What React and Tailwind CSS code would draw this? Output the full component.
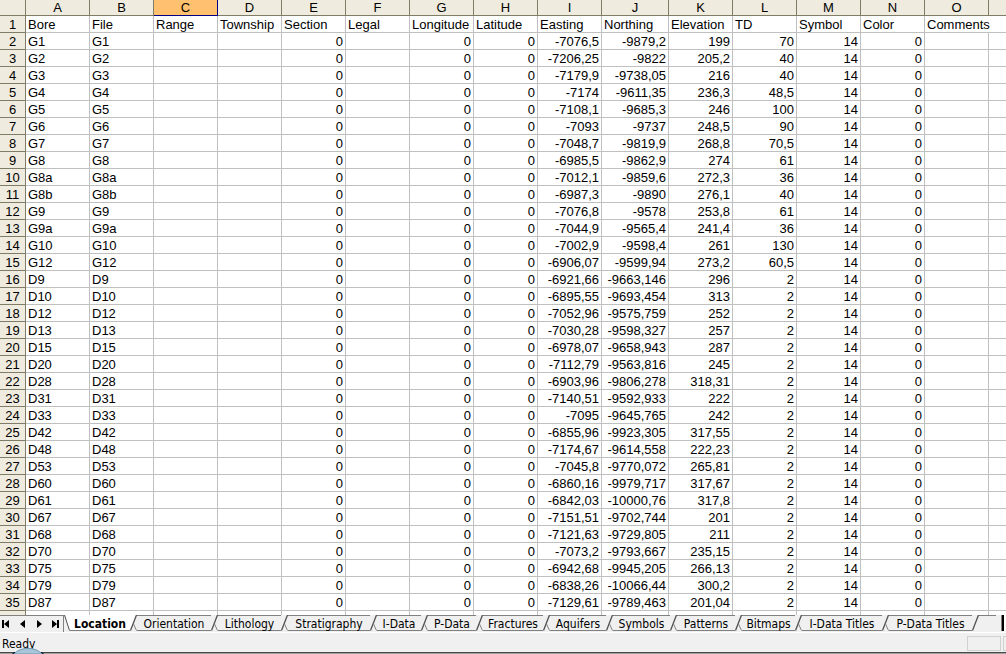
import React, { useState } from "react";
import clsx from "clsx";

const columns = [
  { letter: "A", title: "Bore", width: "w-16" },
  { letter: "B", title: "File", width: "w-16" },
  { letter: "C", title: "Range", width: "w-16" },
  { letter: "D", title: "Township", width: "w-16" },
  { letter: "E", title: "Section", width: "w-16" },
  { letter: "F", title: "Legal", width: "w-16" },
  { letter: "G", title: "Longitude", width: "w-16" },
  { letter: "H", title: "Latitude", width: "w-16" },
  { letter: "I", title: "Easting", width: "w-16" },
  { letter: "J", title: "Northing", width: "w-[67px]" },
  { letter: "K", title: "Elevation", width: "w-16" },
  { letter: "L", title: "TD", width: "w-16" },
  { letter: "M", title: "Symbol", width: "w-16" },
  { letter: "N", title: "Color", width: "w-16" },
  { letter: "O", title: "Comments", width: "w-16" },
];

// bore, easting, northing, elevation, td
const bores = [
  ["G1", "-7076,5", "-9879,2", "199", "70"],
  ["G2", "-7206,25", "-9822", "205,2", "40"],
  ["G3", "-7179,9", "-9738,05", "216", "40"],
  ["G4", "-7174", "-9611,35", "236,3", "48,5"],
  ["G5", "-7108,1", "-9685,3", "246", "100"],
  ["G6", "-7093", "-9737", "248,5", "90"],
  ["G7", "-7048,7", "-9819,9", "268,8", "70,5"],
  ["G8", "-6985,5", "-9862,9", "274", "61"],
  ["G8a", "-7012,1", "-9859,6", "272,3", "36"],
  ["G8b", "-6987,3", "-9890", "276,1", "40"],
  ["G9", "-7076,8", "-9578", "253,8", "61"],
  ["G9a", "-7044,9", "-9565,4", "241,4", "36"],
  ["G10", "-7002,9", "-9598,4", "261", "130"],
  ["G12", "-6906,07", "-9599,94", "273,2", "60,5"],
  ["D9", "-6921,66", "-9663,146", "296", "2"],
  ["D10", "-6895,55", "-9693,454", "313", "2"],
  ["D12", "-7052,96", "-9575,759", "252", "2"],
  ["D13", "-7030,28", "-9598,327", "257", "2"],
  ["D15", "-6978,07", "-9658,943", "287", "2"],
  ["D20", "-7112,79", "-9563,816", "245", "2"],
  ["D28", "-6903,96", "-9806,278", "318,31", "2"],
  ["D31", "-7140,51", "-9592,933", "222", "2"],
  ["D33", "-7095", "-9645,765", "242", "2"],
  ["D42", "-6855,96", "-9923,305", "317,55", "2"],
  ["D48", "-7174,67", "-9614,558", "222,23", "2"],
  ["D53", "-7045,8", "-9770,072", "265,81", "2"],
  ["D60", "-6860,16", "-9979,717", "317,67", "2"],
  ["D61", "-6842,03", "-10000,76", "317,8", "2"],
  ["D67", "-7151,51", "-9702,744", "201", "2"],
  ["D68", "-7121,63", "-9729,805", "211", "2"],
  ["D70", "-7073,2", "-9793,667", "235,15", "2"],
  ["D75", "-6942,68", "-9945,205", "266,13", "2"],
  ["D79", "-6838,26", "-10066,44", "300,2", "2"],
  ["D87", "-7129,61", "-9789,463", "201,04", "2"],
  ["D91", "-6840,93", "-10001,33", "297,3", "2"],
];

const sheets = [
  { name: "Location", width: "w-[67px]" },
  { name: "Orientation", width: "w-[81px]" },
  { name: "Lithology", width: "w-[70px]" },
  { name: "Stratigraphy", width: "w-[89px]" },
  { name: "I-Data", width: "w-[51px]" },
  { name: "P-Data", width: "w-[55px]" },
  { name: "Fractures", width: "w-[67px]" },
  { name: "Aquifers", width: "w-[63px]" },
  { name: "Symbols", width: "w-[64px]" },
  { name: "Patterns", width: "w-[65px]" },
  { name: "Bitmaps", width: "w-[60px]" },
  { name: "I-Data Titles", width: "w-[87px]" },
  { name: "P-Data Titles", width: "w-[90px]" },
];

const navButtons = [
  { label: "First sheet", d: "M2 4h2v8h-2zM9 4v8l-5-4z" },
  { label: "Previous sheet", d: "M9 4v8l-5-4z" },
  { label: "Next sheet", d: "M5 4v8l5-4z" },
  { label: "Last sheet", d: "M4 4v8l5-4zM9 4h2v8h-2z" },
];

const toCells = ([bore, easting, northing, elevation, td]) => [
  bore, bore, "", "", "0", "", "0", "0", easting, northing, elevation, td, "14", "0", "",
];

const headCell =
  "h-4 p-0 border-r border-b border-[#7f7d68] bg-[#efebde] font-normal text-center leading-[15px]";
const rowHead =
  "h-[17px] px-0 pt-0.5 pb-0 border-r border-b border-[#7f7d68] bg-[#efebde] font-normal text-center leading-[14px]";
const bodyCell = "h-[17px] px-0.5 pt-0.5 pb-0 border-b border-[#c0c0c0] leading-[14px]";

const Grid = () => (
  <table className="w-full table-fixed border-separate border-spacing-0 text-[13px] whitespace-nowrap">
    <colgroup>
      <col className="w-[26px]" />
      {columns.map((col) => (
        <col key={col.letter} className={col.width} />
      ))}
      <col />
    </colgroup>
    <thead>
      <tr>
        <td className={headCell}></td>
        {columns.map((col) => (
          <th
            key={col.letter}
            scope="col"
            className={clsx(
              headCell,
              col.letter === "C" && "border-[#000080] bg-[#ffc06f]"
            )}
          >
            {col.letter}
          </th>
        ))}
        <td className={clsx(headCell, "border-r-0")}></td>
      </tr>
    </thead>
    <tbody>
      <tr>
        <th scope="row" className={rowHead}>1</th>
        {columns.map((col) => (
          <td
            key={col.letter}
            className={clsx(bodyCell, col.letter !== "O" && "border-r")}
          >
            {col.title}
          </td>
        ))}
        <td className="border-b border-[#c0c0c0] p-0"></td>
      </tr>
      {bores.map((bore, index) => (
        <tr key={bore[0]}>
          <th scope="row" className={rowHead}>{index + 2}</th>
          {toCells(bore).map((value, i) => (
            <td key={i} className={clsx(bodyCell, "border-r", i > 1 && "text-right")}>
              {value}
            </td>
          ))}
          <td className="border-b border-[#c0c0c0] p-0"></td>
        </tr>
      ))}
    </tbody>
  </table>
);

const Slash = ({ active, nextActive, last }) => (
  <svg className="h-4 w-[7px] shrink-0" viewBox="0 0 7 16" fill="none">
    {active && <path d="M0 0h6L0 16z" fill="#fff" />}
    {nextActive && <path d="M3 8L6 16H7V0H6z" fill="#fff" />}
    <path d="M0.5 15.5L6.5 0" stroke="#505050" strokeWidth="1.3" />
    {!last && <path d="M3.5 9L6.5 15.5" stroke="#808080" />}
  </svg>
);

const SheetTabs = () => {
  const [active, setActive] = useState("Location");

  return (
    <div className="flex h-[17px] shrink-0 bg-[#f0f0f0]">
      <div className="flex w-16 shrink-0 border-t border-r border-[#808080]">
        {navButtons.map((nav) => (
          <button key={nav.label} type="button" aria-label={nav.label} className="flex-1">
            <svg className="h-4 w-4" viewBox="0 0 16 16">
              <path d={nav.d} />
            </svg>
          </button>
        ))}
      </div>
      <svg className="h-4 w-[6px] shrink-0" viewBox="0 0 6 16" fill="none">
        <path d="M0 0H6V16z" fill={active === "Location" ? "#fff" : "#f0f0f0"} />
        <path d="M0.5 0L5.5 15.5" stroke="#505050" />
      </svg>
      {sheets.map((sheet, index) => {
        const isActive = sheet.name === active;
        return (
          <div key={sheet.name} className={clsx("flex shrink-0", sheet.width)}>
            <button
              type="button"
              onClick={() => setActive(sheet.name)}
              className={clsx(
                "h-4 flex-1 border-y border-b-[#808080] pt-0.5 leading-3 whitespace-nowrap",
                isActive ? "border-t-white bg-white font-bold" : "border-t-[#808080]"
              )}
            >
              {sheet.name}
            </button>
            <Slash
              active={isActive}
              nextActive={sheets[index + 1]?.name === active}
              last={index === sheets.length - 1}
            />
          </div>
        );
      })}
      <div className="flex h-4 flex-1 justify-end">
        <div className="flex-1 border-t border-[#808080]"></div>
        <div className="w-1.5 border-r border-[#808080] bg-[#f0f0f0]"></div>
        <div className="w-1 border-l-2 border-black bg-white"></div>
      </div>
    </div>
  );
};

const StatusBar = () => (
  <div className="relative flex h-[22px] shrink-0 flex-col overflow-hidden bg-[#f0f0f0]">
    <div className="flex flex-1 justify-between border-t border-white">
      <span className="pt-[3px] pl-0.5 leading-4">Ready</span>
      <div className="flex gap-0.5 pt-[3px]">
        <span className="h-[15px] w-[34px] border border-[#d0d0d0]"></span>
        <span className="h-[15px] w-[3px] border border-r-0 border-[#d0d0d0]"></span>
      </div>
    </div>
    <div className="h-0.5 border-t border-[#484848] bg-[#a0a0a0]"></div>
    {/* top of the start orb */}
    <svg className="absolute bottom-0 left-3 h-[6px] w-8" viewBox="0 0 32 6">
      <path d="M0 6L2 4H30L32 6z" fill="#10202c" />
      <path d="M2 6C8-1.500 24-1.500 30 6z" fill="#a9c6d8" stroke="#6f98b3" />
    </svg>
  </div>
);

const App = () => {
  return (
    <div className="flex h-screen flex-col overflow-hidden bg-white font-['Liberation_Sans',Arial,sans-serif] text-black">
      <div className="min-h-0 flex-1 overflow-hidden">
        <Grid />
      </div>
      <div className="shrink-0 font-['DejaVu_Sans_Condensed','DejaVu_Sans',sans-serif] text-[12px]">
        <SheetTabs />
        <StatusBar />
      </div>
    </div>
  );
};

export default App;
